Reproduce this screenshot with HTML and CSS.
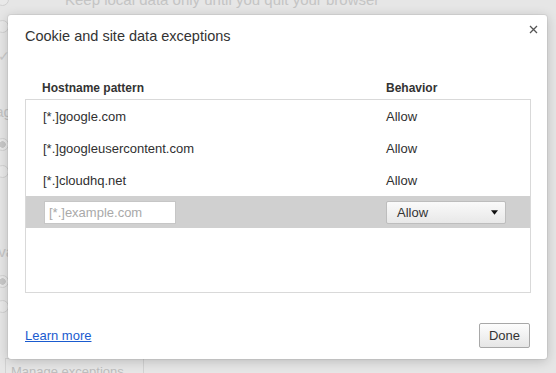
FILE: index.html
```html
<!doctype html>
<html lang="en">
<head>
  <meta charset="UTF-8" />
  <title>Cookie and site data exceptions</title>
  <link rel="stylesheet" href="styles.css">
</head>
<body>
  <div class="backdrop">
    <div class="bg-row bg-top"><span class="bg-radio"></span><span class="bg-text">Keep local data only until you quit your browser</span></div>
    <div class="bg-row gap-27"><span class="bg-radio"></span></div>
    <div class="bg-row gap-30"><span class="bg-check">&#10003;</span></div>
    <div class="bg-row gap-55"><span class="bg-text bg-cut">Manage</span></div>
    <div class="bg-row gap-33"><span class="bg-radio on"></span></div>
    <div class="bg-row gap-27"><span class="bg-radio"></span></div>
    <div class="bg-row gap-80"><span class="bg-text bg-cut-short">Priva</span></div>
    <div class="bg-row gap-30"><span class="bg-radio on"></span></div>
    <div class="bg-row gap-25"><span class="bg-radio"></span></div>
    <div class="bg-row gap-last"><span class="bg-button">Manage exceptions...</span></div>
  </div>

  <div class="overlay">
    <div class="dialog">
      <button class="close-btn" aria-label="Close">
        <svg width="9" height="9" viewBox="0 0 9 9"><path d="M1 1 L8 8 M8 1 L1 8" stroke="#555" stroke-width="1.3" fill="none"/></svg>
      </button>
      <h1 class="dialog-title">Cookie and site data exceptions</h1>

      <div class="list-head">
        <span class="col-host">Hostname pattern</span>
        <span class="col-behavior">Behavior</span>
      </div>

      <div class="list-box">
        <div class="list-row">
          <span class="col-host">[*.]google.com</span>
          <span class="col-behavior">Allow</span>
        </div>
        <div class="list-row">
          <span class="col-host">[*.]googleusercontent.com</span>
          <span class="col-behavior">Allow</span>
        </div>
        <div class="list-row">
          <span class="col-host">[*.]cloudhq.net</span>
          <span class="col-behavior">Allow</span>
        </div>
        <div class="list-row new-row">
          <div class="col-host"><input type="text" class="host-input" placeholder="[*.]example.com"></div>
          <div class="col-behavior">
            <div class="select">
              <span>Allow</span>
              <svg width="8" height="5" viewBox="0 0 8 5"><path d="M0 0 H8 L4 5 Z" fill="#111"/></svg>
            </div>
          </div>
        </div>
      </div>

      <div class="dialog-footer">
        <a href="#" class="learn-more">Learn more</a>
        <button class="done-btn">Done</button>
      </div>
    </div>
  </div>
</body>
</html>
```

FILE: styles.css
```css
* {
  box-sizing: border-box;
  margin: 0;
  padding: 0;
}

body {
  width: 556px;
  height: 373px;
  overflow: hidden;
  font-family: 'Liberation Sans', Arial, sans-serif;
  font-size: 13px;
  color: #303030;
  background: #e6e6e6;
  position: relative;
}

/* ===== faded settings page behind the dialog ===== */
.backdrop {
  display: flex;
  flex-direction: column;
  color: #c4c4c4;
}

.bg-row {
  height: 20px;
  display: flex;
  align-items: center;
  flex-shrink: 0;
}

.bg-top { margin-top: -11px; }
.gap-25 { margin-top: 5px; }
.gap-27 { margin-top: 7px; }
.gap-30 { margin-top: 10px; }
.gap-33 { margin-top: 13px; }
.gap-55 { margin-top: 35px; }
.gap-80 { margin-top: 60px; }
.gap-last { margin-top: 45px; }

.bg-top .bg-text {
  margin-left: 56px;
  font-size: 15px;
}

.bg-radio {
  width: 13px;
  height: 13px;
  border-radius: 50%;
  border: 1px solid #d0d0d0;
  margin-left: -4px;
  background: #e9e9e9;
}

.bg-radio.on {
  background: radial-gradient(circle, #c8c8c8 0 3px, #e9e9e9 3.5px);
}

.bg-check {
  font-size: 14px;
  color: #c8c8c8;
  margin-left: -2px;
}

.bg-cut {
  margin-left: -34px;
  font-size: 15px;
}

.bg-cut-short {
  margin-left: -20px;
  font-size: 15px;
}

.bg-button {
  margin-left: 5px;
  padding: 5px 8px 5px 5px;
  border: 1px solid #d2d2d2;
  font-size: 13px;
  color: #bdbdbd;
}

/* ===== dialog ===== */
.overlay {
  position: absolute;
  inset: 0;
  padding: 15px 9px 0 8px;
}

.dialog {
  position: relative;
  width: 539px;
  height: 344px;
  background: #fff;
  border-radius: 3px;
  box-shadow: 0 2px 12px rgba(0, 0, 0, 0.2), 0 0 0 1px rgba(0, 0, 0, 0.05);
  padding: 12px 17px 0 17px;
}

.close-btn {
  position: absolute;
  top: 10px;
  right: 8px;
  border: none;
  background: none;
  width: 10px;
  height: 10px;
  display: flex;
}

.dialog-title {
  font-size: 14.5px;
  font-weight: normal;
  color: #333;
  line-height: 18px;
}

.list-head {
  display: flex;
  margin-top: 34px;
  height: 20px;
  padding-top: 2px;
  line-height: 14px;
  font-weight: bold;
  font-size: 12px;
  color: #333;
}

.list-head .col-host {
  width: 361px;
  padding-left: 17px;
}

.list-row .col-host {
  width: 360px;
  padding-left: 17px;
}

.list-box {
  width: 506px;
  height: 194px;
  border: 1px solid #d9d9d9;
}

.list-row {
  display: flex;
  align-items: center;
  height: 32px;
  color: #303030;
}

.new-row {
  background: #d0d0d0;
}

.host-input {
  width: 132px;
  height: 23px;
  border: 1px solid #c6c6c6;
  padding: 0 4px;
  font-family: inherit;
  font-size: 13px;
  color: #333;
  margin-left: 1px;
}

.host-input::placeholder {
  color: #a9a9a9;
}

.select {
  width: 120px;
  height: 23px;
  border: 1px solid #bdbdbd;
  border-radius: 2px;
  background: linear-gradient(#fafafa, #e8e8e8);
  display: flex;
  align-items: center;
  justify-content: space-between;
  padding: 0 7px 0 10px;
  color: #333;
}

.select svg {
  width: 7px;
}

.dialog-footer {
  display: flex;
  justify-content: space-between;
  align-items: center;
  margin-top: 30px;
  width: 505px;
}

.learn-more {
  color: #1a5bcf;
  text-decoration: underline;
  font-size: 13px;
}

.done-btn {
  width: 51px;
  height: 25px;
  border: 1px solid #a8a8a8;
  border-radius: 2px;
  background: linear-gradient(#fdfdfd, #e6e6e6);
  font-family: inherit;
  font-size: 13px;
  color: #333;
}
```
